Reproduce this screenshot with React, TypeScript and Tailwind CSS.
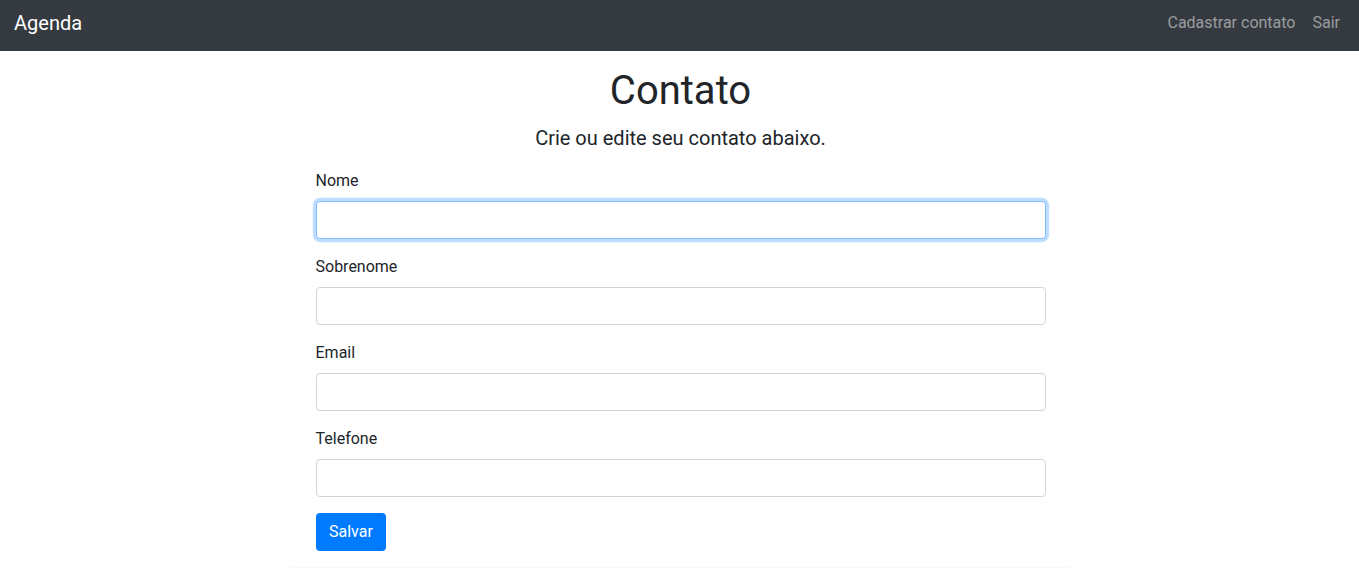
import { useState } from "react";

const inputCls =
  "block w-full h-[38px] px-3 text-base text-[#495057] bg-white border border-[#ced4da] rounded outline-none focus:border-[#80bdff] focus:shadow-[0_0_0_3.2px_rgba(0,123,255,0.25)]";

function Field({ label, autoFocus }: { label: string; autoFocus?: boolean }) {
  const [value, setValue] = useState("");
  return (
    <div className="mb-4">
      <label className="block mb-2 leading-6 text-base text-[#212529]">{label}</label>
      <input
        type="text"
        autoFocus={autoFocus}
        value={value}
        onChange={(e) => setValue(e.target.value)}
        className={inputCls}
      />
    </div>
  );
}

export default function App() {
  return (
    <div className="min-h-screen bg-white font-['Roboto','Liberation_Sans',sans-serif] text-[#212529]">
      <nav className="h-[51px] bg-[#343a40] flex items-center justify-between pl-[14px] pr-[19px]">
        <a className="text-xl text-white leading-none pb-[6px]">Agenda</a>
        <div className="flex items-center gap-[17px] pb-[6px] text-base text-white/50">
          <a>Cadastrar contato</a>
          <a>Sair</a>
        </div>
      </nav>

      <div className="w-[780px] mx-auto pt-4">
        <div className="w-[730px] ml-[26px]">
          <h1 className="text-[40px] leading-[48px] text-center mb-2">Contato</h1>
          <p className="text-xl leading-[30px] text-center mb-4">Crie ou edite seu contato abaixo.</p>

          <form onSubmit={(e) => e.preventDefault()}>
            <Field label="Nome" autoFocus />
            <Field label="Sobrenome" />
            <Field label="Email" />
            <Field label="Telefone" />
            <button
              type="submit"
              className="h-[38px] px-[12.5px] border border-transparent rounded bg-[#007bff] text-white text-base"
            >
              Salvar
            </button>
          </form>
        </div>
        <div className="mt-[15px] h-[2px] bg-gradient-to-b from-[#fcfcfc] to-[#f7f7f7]" />
      </div>
    </div>
  );
}
